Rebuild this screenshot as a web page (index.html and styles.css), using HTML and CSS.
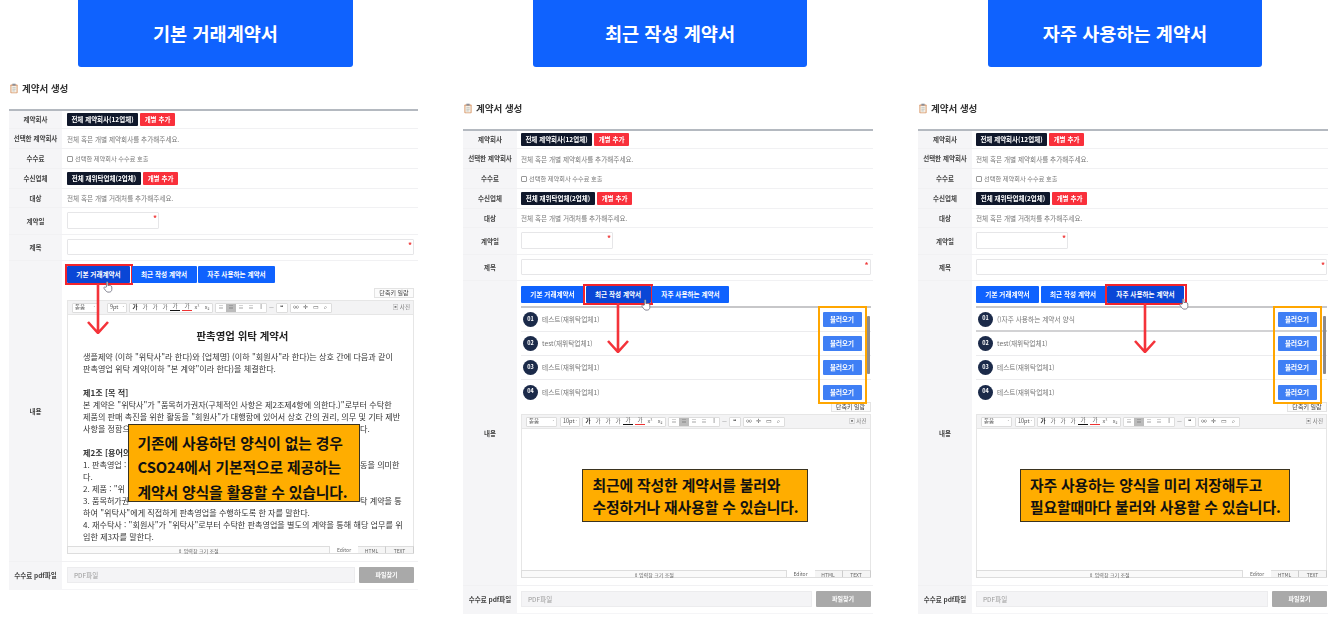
FILE: index.html
```html
<!DOCTYPE html>
<html lang="ko">
<head>
<meta charset="utf-8">
<title>계약서 생성</title>
<link rel="stylesheet" href="styles.css">
</head>
<body>
<main class="page">

<section class="col col--one">
  <h2 class="hero">기본 거래계약서</h2>
  <div class="panel">
    <h3 class="panel-title"><svg class="clip" viewBox="0 0 10 12"><rect x="0.5" y="1" width="9" height="11" rx="1" fill="#d99a6c"/><rect x="1.7" y="2.5" width="6.6" height="8.5" fill="#f6efe6"/><rect x="3" y="0" width="4" height="2.4" fill="#8b8f98"/><path d="M3 5h4M3 7h4M3 9h3" stroke="#9aa" stroke-width=".7"/></svg>계약서 생성</h3>
    <div class="form">
      <div class="row"><div class="label">제약회사</div><div class="body"><span class="btn btn--dark btn--w71">전체 제약회사(12업체)</span><span class="btn btn--red">개별 추가</span></div></div>
      <div class="row"><div class="label">선택한 제약회사</div><div class="body note">전체 혹은 개별 제약회사를 추가해주세요.</div></div>
      <div class="row"><div class="label">수수료</div><div class="body check"><i class="box"></i>선택한 제약회사 수수료 호출</div></div>
      <div class="row"><div class="label">수신업체</div><div class="body"><span class="btn btn--dark btn--w74">전체 재위탁업체(2업체)</span><span class="btn btn--red">개별 추가</span></div></div>
      <div class="row row--short"><div class="label">대상</div><div class="body note">전체 혹은 개별 거래처를 추가해주세요.</div></div>
      <div class="row row--field"><div class="label">계약일</div><div class="body"><div class="input input--date"><b class="star">*</b></div></div></div>
      <div class="row row--field"><div class="label">제목</div><div class="body"><div class="input"><b class="star">*</b></div></div></div>
      <div class="row row--content">
        <div class="label">내용</div>
        <div class="body body--stack">
          <div class="tabs">
            <span class="tab tab--a tab--on">기본 거래계약서<svg class="hand" viewBox="0 0 10 12"><path d="M3.4 6V1.4c0-1 1.5-1 1.5 0V4.600c1.500-.4 3.900-.2 3.900 1.400v2.500c0 1.400-1 2.600-2.500 2.600H5C3.700 11.100 3 10 2.200 9L1 7.300c-.5-.9.6-1.700 1.300-1z" fill="#fff" stroke="#667" stroke-width=".8"/></svg></span>
            <span class="tab tab--b">최근 작성 계약서</span>
            <span class="tab tab--c">자주 사용하는 계약서</span>
          </div>
          <div class="shortcut-line"><span class="shortcut">단축키 일람</span></div>
          <div class="toolbar">
            <span class="sel sel--font">돋움<em>·</em></span><span class="sel sel--size">9pt<em>·</em></span>
            <span class="group"><u>가</u><s>가</s><i>가</i><i>가</i><b class="ul">가</b><b class="rd">가</b><i>x²</i><i>x₂</i></span>
            <span class="group"><i>≡</i><i class="on">≡</i><i>≡</i><i>≡</i><i>I</i></span>
            <span class="mark">—</span><span class="group"><b>❝</b></span>
            <span class="group"><i>∞</i><i>✛</i><i>▭</i><i>⌕</i></span>
            <span class="photo">▣ 사진</span>
          </div>
          <div class="editor editor--doc">
            <h4 class="doc-title">판촉영업 위탁 계약서</h4>
            <div class="doc">
              <p class="line">생플제약 (이하 "위탁사"라 한다)와 {업체명} (이하 "회원사"라 한다)는 상호 간에 다음과 같이</p>
              <p class="line">판촉영업 위탁 계약(이하 "본 계약"이라 한다)을 체결한다.</p>
              <p class="line line--blank"></p>
              <p class="line line--head">제1조 [목 적]</p>
              <p class="line">본 계약은 "위탁사"가 "품목허가권자(구체적인 사항은 제2조제4항에 의한다.)"로부터 수탁한</p>
              <p class="line">제품의 판매 촉진을 위한 활동을 "회원사"가 대행함에 있어서 상호 간의 권리, 의무 및 기타 제반</p>
              <p class="line line--split"><span>사항을 정함으</span><span>다.</span></p>
              <p class="line line--blank"></p>
              <p class="line line--head">제2조 [용어의</p>
              <p class="line line--split"><span>1. 판촉영업 :</span><span>동을 의미한</span></p>
              <p class="line">다.</p>
              <p class="line">2. 제품 : "위</p>
              <p class="line line--split"><span>3. 품목허가권</span><span>탁 계약을 통</span></p>
              <p class="line">하여 "위탁사"에게 직접하게 판촉영업을 수행하도록 한 자를 말한다.</p>
              <p class="line">4. 재수탁사 : "회원사"가 "위탁사"로부터 수탁한 판촉영업을 별도의 계약을 통해 해당 업무를 위</p>
              <p class="line">임한 제3자를 말한다.</p>
            </div>
          </div>
          <div class="bar"><span class="resize">⇕ 입력창 크기 조절</span><span class="mode mode--on">Editor</span><span class="mode">HTML</span><span class="mode">TEXT</span></div>
        </div>
      </div>
      <div class="row row--pdf"><div class="label">수수료 pdf파일</div><div class="body body--pdf"><div class="pdf-input">PDF파일</div><span class="find">파일찾기</span></div></div>
    </div>
  </div>
  <svg class="arrow arrow--one" viewBox="0 0 24 50"><path d="M12 0V49M2 38L12 49L22 38" fill="none" stroke="#f4333a" stroke-width="2.600"/></svg>
  <div class="callout callout--one">기존에 사용하던 양식이 없는 경우<br>CSO24에서 기본적으로 제공하는<br>계약서 양식을 활용할 수 있습니다.</div>
</section>

<section class="col col--two">
  <h2 class="hero">최근 작성 계약서</h2>
  <div class="panel">
    <h3 class="panel-title"><svg class="clip" viewBox="0 0 10 12"><rect x="0.5" y="1" width="9" height="11" rx="1" fill="#d99a6c"/><rect x="1.7" y="2.5" width="6.6" height="8.5" fill="#f6efe6"/><rect x="3" y="0" width="4" height="2.4" fill="#8b8f98"/><path d="M3 5h4M3 7h4M3 9h3" stroke="#9aa" stroke-width=".7"/></svg>계약서 생성</h3>
    <div class="form">
      <div class="row"><div class="label">제약회사</div><div class="body"><span class="btn btn--dark btn--w71">전체 제약회사(12업체)</span><span class="btn btn--red">개별 추가</span></div></div>
      <div class="row"><div class="label">선택한 제약회사</div><div class="body note">전체 혹은 개별 제약회사를 추가해주세요.</div></div>
      <div class="row"><div class="label">수수료</div><div class="body check"><i class="box"></i>선택한 제약회사 수수료 호출</div></div>
      <div class="row"><div class="label">수신업체</div><div class="body"><span class="btn btn--dark btn--w74">전체 재위탁업체(2업체)</span><span class="btn btn--red">개별 추가</span></div></div>
      <div class="row row--short"><div class="label">대상</div><div class="body note">전체 혹은 개별 거래처를 추가해주세요.</div></div>
      <div class="row row--field"><div class="label">계약일</div><div class="body"><div class="input input--date"><b class="star">*</b></div></div></div>
      <div class="row row--field"><div class="label">제목</div><div class="body"><div class="input"><b class="star">*</b></div></div></div>
      <div class="row row--content">
        <div class="label">내용</div>
        <div class="body body--stack">
          <div class="tabs">
            <span class="tab tab--a">기본 거래계약서</span>
            <span class="tab tab--b tab--on">최근 작성 계약서<svg class="hand hand--two" viewBox="0 0 10 12"><path d="M3.4 6V1.4c0-1 1.500-1 1.500 0V4.600c1.500-.4 3.900-.2 3.900 1.400v2.500c0 1.400-1 2.600-2.500 2.600H5C3.700 11.100 3 10 2.200 9L1 7.300c-.5-.9.6-1.700 1.300-1z" fill="#fff" stroke="#667" stroke-width=".8"/></svg></span>
            <span class="tab tab--c">자주 사용하는 계약서</span>
          </div>
          <ul class="list">
            <li class="item"><span class="num">01</span><span class="name">테스트(재위탁업체1)</span><span class="load">불러오기</span></li>
            <li class="item"><span class="num">02</span><span class="name">test(재위탁업체1)</span><span class="load">불러오기</span></li>
            <li class="item"><span class="num">03</span><span class="name">테스트(재위탁업체1)</span><span class="load">불러오기</span></li>
            <li class="item"><span class="num">04</span><span class="name">테스트(재위탁업체1)</span><span class="load">불러오기</span></li>
            <li class="scroll"><i class="thumb"></i></li>
            <li class="frame"></li>
          </ul>
          <div class="shortcut-line shortcut-line--tight"><span class="shortcut">단축키 일람</span></div>
          <div class="toolbar">
            <span class="sel sel--font sel--wide">돋움<em>·</em></span><span class="sel sel--size">10pt<em>·</em></span>
            <span class="group"><u>가</u><s>가</s><i>가</i><i>가</i><b class="ul">가</b><b class="rd">가</b><i>x²</i><i>x₂</i></span>
            <span class="group"><i>≡</i><i class="on">≡</i><i>≡</i><i>≡</i><i>I</i></span>
            <span class="mark">—</span><span class="group"><b>❝</b></span>
            <span class="group"><i>∞</i><i>✛</i><i>▭</i><i>⌕</i></span>
            <span class="photo">▣ 사진</span>
          </div>
          <div class="editor"></div>
          <div class="bar"><span class="resize">⇕ 입력창 크기 조절</span><span class="mode mode--on">Editor</span><span class="mode">HTML</span><span class="mode">TEXT</span></div>
        </div>
      </div>
      <div class="row row--pdf"><div class="label">수수료 pdf파일</div><div class="body body--pdf"><div class="pdf-input">PDF파일</div><span class="find">파일찾기</span></div></div>
    </div>
  </div>
  <svg class="arrow arrow--two" viewBox="0 0 24 50"><path d="M12 0V49M2 38L12 49L22 38" fill="none" stroke="#f4333a" stroke-width="2.600"/></svg>
  <div class="callout callout--two">최근에 작성한 계약서를 불러와<br>수정하거나 재사용할 수 있습니다.</div>
</section>

<section class="col col--three">
  <h2 class="hero">자주 사용하는 계약서</h2>
  <div class="panel">
    <h3 class="panel-title"><svg class="clip" viewBox="0 0 10 12"><rect x="0.5" y="1" width="9" height="11" rx="1" fill="#d99a6c"/><rect x="1.7" y="2.5" width="6.6" height="8.5" fill="#f6efe6"/><rect x="3" y="0" width="4" height="2.4" fill="#8b8f98"/><path d="M3 5h4M3 7h4M3 9h3" stroke="#9aa" stroke-width=".7"/></svg>계약서 생성</h3>
    <div class="form">
      <div class="row"><div class="label">제약회사</div><div class="body"><span class="btn btn--dark btn--w71">전체 제약회사(12업체)</span><span class="btn btn--red">개별 추가</span></div></div>
      <div class="row"><div class="label">선택한 제약회사</div><div class="body note">전체 혹은 개별 제약회사를 추가해주세요.</div></div>
      <div class="row"><div class="label">수수료</div><div class="body check"><i class="box"></i>선택한 제약회사 수수료 호출</div></div>
      <div class="row"><div class="label">수신업체</div><div class="body"><span class="btn btn--dark btn--w74">전체 재위탁업체(2업체)</span><span class="btn btn--red">개별 추가</span></div></div>
      <div class="row row--short"><div class="label">대상</div><div class="body note">전체 혹은 개별 거래처를 추가해주세요.</div></div>
      <div class="row row--field"><div class="label">계약일</div><div class="body"><div class="input input--date"><b class="star">*</b></div></div></div>
      <div class="row row--field"><div class="label">제목</div><div class="body"><div class="input"><b class="star">*</b></div></div></div>
      <div class="row row--content">
        <div class="label">내용</div>
        <div class="body body--stack">
          <div class="tabs">
            <span class="tab tab--a">기본 거래계약서</span>
            <span class="tab tab--b">최근 작성 계약서</span>
            <span class="tab tab--c tab--on">자주 사용하는 계약서<svg class="hand hand--three" viewBox="0 0 10 12"><path d="M3.4 6V1.4c0-1 1.500-1 1.500 0V4.600c1.500-.4 3.900-.2 3.900 1.400v2.500c0 1.400-1 2.600-2.500 2.600H5C3.700 11.100 3 10 2.200 9L1 7.300c-.5-.9.6-1.700 1.300-1z" fill="#fff" stroke="#667" stroke-width=".8"/></svg></span>
          </div>
          <ul class="list">
            <li class="item item--first"><span class="num">01</span><span class="name">()자주 사용하는 계약서 양식</span><span class="load">불러오기</span></li>
            <li class="item"><span class="num">02</span><span class="name">test(재위탁업체1)</span><span class="load">불러오기</span></li>
            <li class="item"><span class="num">03</span><span class="name">테스트(재위탁업체1)</span><span class="load">불러오기</span></li>
            <li class="item"><span class="num">04</span><span class="name">테스트(재위탁업체1)</span><span class="load">불러오기</span></li>
            <li class="scroll"><i class="thumb"></i></li>
            <li class="frame"></li>
          </ul>
          <div class="shortcut-line shortcut-line--tight"><span class="shortcut">단축키 일람</span></div>
          <div class="toolbar">
            <span class="sel sel--font sel--wide">돋움<em>·</em></span><span class="sel sel--size">10pt<em>·</em></span>
            <span class="group"><u>가</u><s>가</s><i>가</i><i>가</i><b class="ul">가</b><b class="rd">가</b><i>x²</i><i>x₂</i></span>
            <span class="group"><i>≡</i><i class="on">≡</i><i>≡</i><i>≡</i><i>I</i></span>
            <span class="mark">—</span><span class="group"><b>❝</b></span>
            <span class="group"><i>∞</i><i>✛</i><i>▭</i><i>⌕</i></span>
            <span class="photo">▣ 사진</span>
          </div>
          <div class="editor"></div>
          <div class="bar"><span class="resize">⇕ 입력창 크기 조절</span><span class="mode mode--on">Editor</span><span class="mode">HTML</span><span class="mode">TEXT</span></div>
        </div>
      </div>
      <div class="row row--pdf"><div class="label">수수료 pdf파일</div><div class="body body--pdf"><div class="pdf-input">PDF파일</div><span class="find">파일찾기</span></div></div>
    </div>
  </div>
  <svg class="arrow arrow--three" viewBox="0 0 24 50"><path d="M12 0V49M2 38L12 49L22 38" fill="none" stroke="#f4333a" stroke-width="2.600"/></svg>
  <div class="callout callout--three">자주 사용하는 양식을 미리 저장해두고<br>필요할때마다 불러와 사용할 수 있습니다.</div>
</section>

</main>
</body>
</html>
```
FILE: styles.css
```css
* { box-sizing: border-box; }
html, body { margin: 0; padding: 0; background: #fff; }
body {
  width: 1340px;
  height: 623px;
  overflow: hidden;
  font-family: "Noto Sans CJK KR", "Noto Sans", sans-serif;
  color: #333;
}
.page {
  display: grid;
  grid-template-columns: 409px 410px 410px;
  column-gap: 45px;
  padding-left: 9px;
}
.col { position: relative; height: 623px; }
.col--one { --label: 53px; --pad: 5px; --right: 4px; --top: 14px; --ed: 231px; --hero-left: 69px; --hero-w: 275px; }
.col--two { --label: 54px; --pad: 4px; --right: 2.500px; --top: 34px; --ed: 141px; --hero-left: 70px; --hero-w: 274px; }
.col--three { --label: 54px; --pad: 4px; --right: 1px; --top: 34px; --ed: 141px; --hero-left: 70px; --hero-w: 274px; }

.hero {
  width: var(--hero-w);
  height: 67px;
  margin: 0 0 0 var(--hero-left);
  display: flex;
  align-items: center;
  justify-content: center;
  background: #0f62fe;
  border-radius: 0 0 3px 3px;
  color: #fff;
  font-size: 18.600px;
  font-weight: 700;
  line-height: 1;
}

.panel { margin-top: var(--top); }
.panel-title {
  height: 28px;
  margin: 0;
  display: flex;
  align-items: flex-start;
  gap: 4px;
  padding-left: 1px;
  font-size: 9.500px;
  line-height: 14px;
  font-weight: 700;
  color: #333;
  filter: blur(.3px);
}
.clip { width: 8px; height: 11px; margin-top: 2px; flex: none; }

.form { border-top: 2px solid #b4b9c0; filter: blur(.3px); }
.row {
  display: flex;
  height: 20px;
  border-bottom: 1px solid #f1f1f3;
}
.row:first-child { height: 18px; }
.row--short { height: 19px; }
.row--field { height: 26.500px; }
.row--content { height: auto; }
.row--pdf { height: 27.500px; border-bottom: 1px solid #f5f5f7; }
.label {
  flex: none;
  width: var(--label);
  display: flex;
  align-items: center;
  justify-content: center;
  background: #f5f5f7;
  font-size: 6.500px;
  font-weight: 700;
  color: #444;
  white-space: nowrap;
  line-height: 1;
}
.body {
  flex: 1;
  min-width: 0;
  display: flex;
  align-items: center;
  gap: 2px;
  padding: 0 var(--right) 0 var(--pad);
}
.body--stack {
  display: block;
  padding-top: 5px;
  padding-bottom: 7px;
}
.note { font-size: 6.600px; color: #777; white-space: nowrap; }
.check { font-size: 6.200px; color: #777; white-space: nowrap; }
.box {
  width: 6px;
  height: 6px;
  border: 1px solid #999;
  border-radius: 1px;
  flex: none;
}
.btn {
  height: 13px;
  display: inline-flex;
  align-items: center;
  justify-content: center;
  color: #fff;
  font-size: 6.500px;
  font-weight: 700;
  white-space: nowrap;
  line-height: 1;
  border-radius: 1px;
}
.btn--dark { background: #10182b; }
.btn--red { background: #f9303b; width: 35px; }
.btn--w71 { width: 71px; }
.btn--w74 { width: 74px; }

.input {
  position: relative;
  width: 100%;
  height: 16px;
  border: 1px solid #e6e6e8;
  border-radius: 1px;
  background: #fff;
}
.input--date { width: 92px; height: 17px; }
.star {
  position: absolute;
  right: 1px;
  top: 0;
  color: #ef3b3b;
  font-size: 8px;
  line-height: 9px;
}

.tabs { display: flex; gap: 1.500px; height: 17px; }
.tab {
  position: relative;
  display: flex;
  align-items: center;
  justify-content: center;
  background: #0f62fe;
  color: #fff;
  font-size: 6.600px;
  font-weight: 700;
  white-space: nowrap;
  line-height: 1;
  border-radius: 1px;
}
.tab--a { width: 63px; }
.tab--b { width: 65px; }
.tab--c { width: 77px; }
.tab--on { background: #0a46d6; }
.tab--on::after {
  content: "";
  position: absolute;
  inset: -2px -2.500px;
  border: 2px solid #f3242c;
  pointer-events: none;
}
.hand {
  position: absolute;
  left: 36px;
  top: 15px;
  width: 10px;
  height: 12px;
  z-index: 3;
}
.hand--two { left: 55px; top: 13px; }
.hand--three { left: 72px; top: 12px; }

.shortcut-line { display: flex; justify-content: flex-end; margin-top: 5px; height: 12px; }
.shortcut-line--tight { margin-top: -1px; }
.shortcut {
  width: 40px;
  height: 10px;
  display: flex;
  align-items: center;
  justify-content: center;
  border: 1px solid #e3e3e3;
  background: #fbfbfb;
  color: #444;
  font-size: 6px;
  line-height: 1;
  white-space: nowrap;
}

.toolbar {
  height: 15px;
  display: flex;
  align-items: center;
  gap: 2px;
  padding: 0 3px 0 4px;
  background: #f3f3f4;
  border: 1px solid #e6e6e6;
  font-size: 5.500px;
  line-height: 1;
  color: #555;
  white-space: nowrap;
}
.sel, .group {
  display: inline-flex;
  align-items: center;
  height: 10px;
  background: #fff;
  border: 1px solid #ddd;
  border-radius: 1px;
}
.sel { justify-content: space-between; padding: 0 2px; }
.sel em { font-style: normal; color: #888; }
.sel--font { width: 26px; margin-right: 7px; }
.sel--wide { width: 31px; margin-right: 1px; }
.sel--size { width: 20px; }
.group i, .group b, .group u, .group s {
  width: 10px;
  height: 8px;
  display: inline-flex;
  align-items: center;
  justify-content: center;
  font-style: normal;
  font-weight: 400;
  text-decoration: none;
}
.group u { font-weight: 700; color: #222; }
.group .ul { border-bottom: 1.500px solid #111; height: 7px; }
.group .rd { border-bottom: 1.500px solid #e33; height: 7px; margin-left: 2px; }
.group .on { background: #bbb; }
.mark { color: #888; }
.photo { margin-left: auto; color: #777; }

.editor {
  height: var(--ed);
  border-left: 1px solid #e6e6e6;
  border-right: 1px solid #e6e6e6;
  background: #fff;
  overflow: hidden;
}
.editor--doc { padding: 13px 0 0 15px; }
.doc-title {
  margin: 0 0 8px;
  height: 15px;
  padding-right: 11px;
  font-size: 10.400px;
  line-height: 15px;
  font-weight: 700;
  color: #222;
  text-align: center;
}
.doc { font-size: 8.100px; line-height: 12px; color: #333; white-space: nowrap; }
.line { margin: 0; height: 12px; }
.line--head { font-weight: 700; }
.line--split { display: grid; grid-template-columns: 277px auto; }

.bar {
  display: flex;
  align-items: stretch;
  height: 8px;
  border-bottom: 1px solid #ddd;
  font-size: 5px;
  line-height: 7px;
  color: #666;
  white-space: nowrap;
}
.resize {
  flex: 1;
  text-align: center;
  background: #fafafa;
  border: 1px solid #ddd;
  border-bottom: 0;
}
.mode {
  width: 28px;
  text-align: center;
  background: #f5f5f5;
  border-top: 1px solid #ddd;
  border-right: 1px solid #ccc;
}
.mode--on { background: #fff; border-top: 0; border-right: 0; }

.list {
  position: relative;
  list-style: none;
  margin: 3px 0 0;
  padding: 0;
  height: 97px;
  border-top: 2px solid #c7c7c9;
  --btn-right: 9px;
}
.col--three .list { --btn-right: 10.500px; }
.item {
  display: flex;
  align-items: center;
  height: 24px;
  padding: 0 var(--btn-right) 0 2px;
  border-bottom: 1px solid #ececee;
}
.item:nth-child(4) { border-bottom: 0; }
.item--first { border-bottom: 2px solid #d2d2d4; }
.num {
  width: 15px;
  height: 15px;
  flex: none;
  display: flex;
  align-items: center;
  justify-content: center;
  border-radius: 50%;
  background: #1b2a49;
  color: #fff;
  font-size: 5.500px;
  font-weight: 700;
  line-height: 1;
}
.name {
  flex: 1;
  margin-left: 4px;
  font-size: 6.700px;
  color: #777;
  white-space: nowrap;
  line-height: 1;
}
.load {
  width: 39px;
  height: 15px;
  display: flex;
  align-items: center;
  justify-content: center;
  background: #3f7ff5;
  color: #fff;
  font-size: 6.500px;
  font-weight: 700;
  white-space: nowrap;
  line-height: 1;
  border-radius: 1px;
}
.frame {
  position: absolute;
  top: -2px;
  bottom: -1px;
  right: calc(var(--btn-right) - 5px);
  width: 49px;
  border: 2.500px solid #ffa600;
  pointer-events: none;
}
.scroll {
  position: absolute;
  top: 8px;
  right: 1px;
  width: 3px;
  height: 58px;
  background: #eee;
}
.thumb { display: block; height: 100%; background: #8b8b90; border-radius: 1px; }

.body--pdf { gap: 4px; }
.pdf-input {
  flex: 1;
  height: 16px;
  display: flex;
  align-items: center;
  padding-left: 6px;
  background: #f4f4f6;
  border: 1px solid #ececee;
  color: #999;
  font-size: 6.500px;
  line-height: 1;
}
.find {
  width: 55px;
  height: 16px;
  display: flex;
  align-items: center;
  justify-content: center;
  background: #a9a9a9;
  color: #fff;
  font-size: 6px;
  font-weight: 700;
  line-height: 1;
  border-radius: 1px;
}

.arrow { position: absolute; width: 24px; height: 50px; z-index: 4; }
.arrow--one { left: 77px; top: 284px; }
.arrow--two { left: 143px; top: 303px; }
.arrow--three { left: 215px; top: 303px; }

.callout {
  position: absolute;
  z-index: 5;
  background: #ffad00;
  border: 1px solid #3a3320;
  color: #111;
  font-size: 14.800px;
  font-weight: 700;
  white-space: nowrap;
  letter-spacing: -.1px;
}
.callout--one { left: 119px; top: 424px; width: 232px; height: 78px; padding: 5.500px 0 0 8.500px; line-height: 24.600px; }
.callout--two { left: 119px; top: 469px; width: 226px; height: 53px; padding: 4px 0 0 9.500px; line-height: 22px; }
.callout--three { left: 102px; top: 469px; width: 270px; height: 53px; padding: 4px 0 0 9px; line-height: 22px; }
```
